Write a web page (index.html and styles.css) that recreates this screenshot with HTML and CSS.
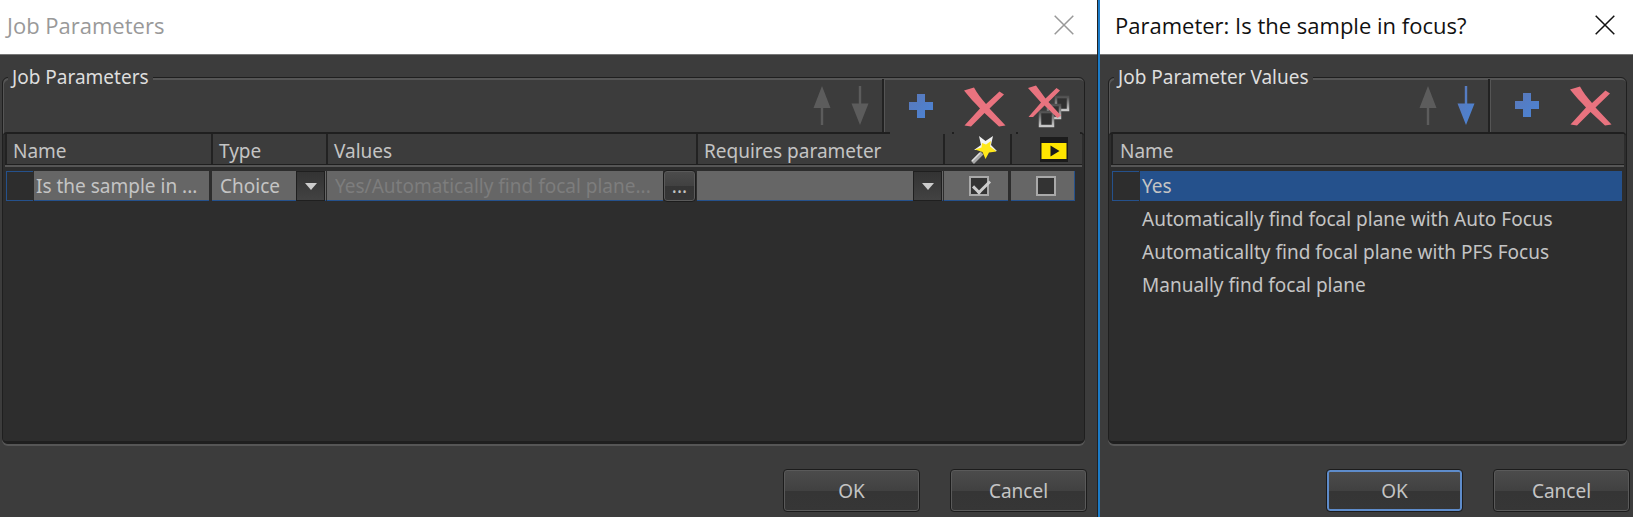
FILE: index.html
```html
<!DOCTYPE html>
<html lang="en">
<head>
<meta charset="utf-8">
<title>Job Parameters</title>
<link rel="stylesheet" href="styles.css">
</head>
<body>
<svg class="defs" aria-hidden="true">
  <defs>
    <linearGradient id="blue" x1="0" y1="0" x2="1" y2="1"><stop offset="0" stop-color="#5b78b8"/><stop offset="1" stop-color="#4a84d6"/></linearGradient>
    <linearGradient id="metal" x1="0" y1="0" x2="0" y2="1"><stop offset="0" stop-color="#505050"/><stop offset="1" stop-color="#c8c8c8"/></linearGradient>
    <symbol id="up" viewBox="0 0 18 40"><path d="M9 0 17.500 22H10.200V39H7.800V22H.5z"/></symbol>
    <symbol id="down" viewBox="0 0 18 40"><path d="M9 39 17.500 17.500H10.200V0H7.800V17.500H.5z"/></symbol>
    <symbol id="plus" viewBox="0 0 24 24"><path fill="url(#blue)" d="M8 0h8v8h8v8h-8v8H8v-8H0V8h8z"/></symbol>
    <symbol id="cross" viewBox="0 0 42 40"><path fill="#e9737f" d="M0 3.500 10 .5C13 6 17.500 12 22 17L35.500 4.500 40 7.500 25.500 21.500 41.500 38.500 35 39.500 20.500 26 7 39.500 .5 38.500 16 21.500C11 16 5 10 0 3.500z"/></symbol>
    <symbol id="close" viewBox="0 0 20 20"><path fill="none" stroke="currentColor" stroke-width="1.500" d="M.7.7 19.300 19.300M19.300.7.7 19.300"/></symbol>
  </defs>
</svg>
<main class="desktop">
  <section class="window">
    <header class="titlebar inactive">
      <h1>Job Parameters</h1>
      <button class="close" aria-label="Close"><svg><use href="#close"/></svg></button>
    </header>
    <div class="content">
      <fieldset class="group">
        <legend>Job Parameters</legend>
        <div class="toolbar overlapping">
          <button class="tool arrow" aria-label="Move up" disabled><svg width="18" height="40"><use href="#up"/></svg></button>
          <button class="tool arrow" aria-label="Move down" disabled><svg width="18" height="40"><use href="#down"/></svg></button>
          <span class="separator"></span>
          <button class="tool add" aria-label="Add"><svg width="24" height="24"><use href="#plus"/></svg></button>
          <button class="tool" aria-label="Remove"><svg width="42" height="40"><use href="#cross"/></svg></button>
          <button class="tool" aria-label="Remove all"><svg width="42" height="44" viewBox="0 0 42 44">
            <g fill="#303030" stroke="url(#metal)" stroke-width="2.500"><path d="M28 12H40V25H28z"/><path d="M20 20H32V33H20z"/><path d="M12 27H25V41H12z"/></g>
            <path fill="#e9737f" d="M0 3 8 .5 17.500 13.500 28.500 3 32 5.500 20.500 17 33 30.500 29.500 33 16.500 20.500 5 32H.5L13 17.500z"/></svg></button>
        </div>
        <div class="panel">
          <table class="params">
            <colgroup><col class="c-name"><col class="c-type"><col><col class="c-req"><col class="c-wand"><col class="c-play"></colgroup>
            <thead><tr>
              <th>Name</th><th>Type</th><th>Values</th><th>Requires parameter</th>
              <th class="icon" aria-label="Wizard"><svg width="28" height="28" viewBox="0 0 28 28"><path stroke="#a8a8a8" stroke-width="4" d="M1.500 26.500 11 17"/><path stroke="#e0e0e0" stroke-width="1.500" d="M1 25 9 17"/><path fill="#f2f2f2" d="M8 0 14.500 5 22 0 20 9 26 15 14 14 3 14 10 9z"/><path fill="#ffe81a" d="M11 7 15 8.500 20 5 19 10.500 25.500 15.500 18 16.500 14.500 23 11.500 16 4 13.500 10.500 11.500z"/></svg></th>
              <th class="icon" aria-label="Run"><svg width="28" height="26" viewBox="0 0 28 26"><path fill="#1c1c1c" d="M0 0H28V25H0z"/><path fill="#ffe600" d="M1.500 6H26.500V22H1.500z"/><path fill="#1c1c1c" d="M10.500 8.500 19.500 14 10.500 19.500z"/></svg></th>
            </tr></thead>
            <tbody><tr>
              <td><div class="cell"><span class="handle"></span><input class="field name" type="text" aria-label="Name" value="Is the sample in ..."></div></td>
              <td><div class="cell combo"><select class="field" aria-label="Type"><option>Choice</option></select><span class="drop"></span></div></td>
              <td><div class="cell flush"><input class="field" type="text" aria-label="Values" value="Yes/Automatically find focal plane..." disabled><button class="more" aria-label="Edit values">...</button></div></td>
              <td><div class="cell combo"><select class="field" aria-label="Requires parameter"><option></option></select><span class="drop"></span></div></td>
              <td><label class="cell check"><input type="checkbox" aria-label="Show in wizard" checked></label></td>
              <td><label class="cell check last"><input type="checkbox" aria-label="Show in run"></label></td>
            </tr></tbody>
          </table>
        </div>
      </fieldset>
      <footer class="actions"><button class="button">OK</button><button class="button">Cancel</button></footer>
    </div>
  </section>
  <section class="window dialog">
    <header class="titlebar">
      <h1>Parameter: Is the sample in focus?</h1>
      <button class="close" aria-label="Close"><svg><use href="#close"/></svg></button>
    </header>
    <div class="content">
      <fieldset class="group">
        <legend>Job Parameter Values</legend>
        <div class="toolbar">
          <button class="tool arrow" aria-label="Move up" disabled><svg width="18" height="40"><use href="#up"/></svg></button>
          <button class="tool arrow" aria-label="Move down"><svg width="18" height="40"><use href="#down"/></svg></button>
          <span class="separator"></span>
          <button class="tool add" aria-label="Add"><svg width="24" height="24"><use href="#plus"/></svg></button>
          <button class="tool" aria-label="Remove"><svg width="42" height="40"><use href="#cross"/></svg></button>
        </div>
        <div class="panel">
          <table class="values">
            <thead><tr><th>Name</th></tr></thead>
            <tbody>
              <tr class="selected"><td><div class="cell"><span class="handle"></span><span class="value">Yes</span></div></td></tr>
              <tr><td>Automatically find focal plane with Auto Focus</td></tr>
              <tr><td>Automaticallty find focal plane with PFS Focus</td></tr>
              <tr><td>Manually find focal plane</td></tr>
            </tbody>
          </table>
        </div>
      </fieldset>
      <footer class="actions"><button class="button default">OK</button><button class="button">Cancel</button></footer>
    </div>
  </section>
</main>
</body>
</html>
```
FILE: styles.css
```css
* { box-sizing: border-box; }
body {
  margin: 0;
  background: #3c3c3c;
  color: #c4c4c4;
  font: 19px/28px "Noto Sans", "Open Sans", sans-serif;
}
button, input, select { font: inherit; color: inherit; margin: 0; }
button { padding: 0; border: 0; background: none; }
svg { display: block; }
.defs { position: absolute; width: 0; height: 0; }

.desktop {
  display: grid;
  grid-template-columns: minmax(0, 1097fr) minmax(0, 536fr);
  min-height: 100vh;
}
.window { display: flex; flex-direction: column; }
.dialog { border-left: 1px solid #222; box-shadow: inset 2px 0 #1c7cc8; padding-left: 2px; }

.titlebar {
  display: flex;
  align-items: center;
  justify-content: space-between;
  height: 54px;
  padding: 0 23px 4px 7px;
  background: #fff;
  color: #111;
}
.dialog .titlebar { padding: 0 18px 4px 15px; }
.titlebar h1 { margin: 0; font: 22px/30px "Open Sans", "Noto Sans", sans-serif; }
.inactive { color: #999; }
.close svg { width: 20px; height: 20px; }

.content {
  flex: 1;
  display: flex;
  flex-direction: column;
  padding: 8px 12px 5px 2px;
  border-top: 1px solid #777;
}
.dialog .content { padding: 8px 6px 5px 8px; }

.group {
  flex: 1;
  display: flex;
  flex-direction: column;
  min-width: 0;
  margin: 0;
  padding: 0;
  border: 1px solid #1f1f1f;
  border-radius: 6px;
  box-shadow: inset 1px 2px #565656, 0 2px #565656;
}
.group legend { margin-left: 5px; padding: 0 4px; background: #3c3c3c; color: #dedede; }

.toolbar {
  display: flex;
  justify-content: flex-end;
  height: 55px;
  margin-top: -14px;
  padding-right: 3px;
}
.tool { display: flex; align-items: center; justify-content: center; width: 64px; padding-top: 2px; }
.tool svg { fill: url(#blue); }
.tool:disabled svg { fill: #5c5c5c; }
.arrow { width: 38px; }
.add { padding-top: 0; }
.separator { width: 3px; margin: 2px 4px 0 3px; background: #555; border-left: 2px solid #222; }

.panel { flex: 1; padding: 0 2px; background: #2d2d2d; border-top: 2px solid #1f1f1f; border-bottom: 2px solid #1f1f1f; border-radius: 4px; }
.overlapping .tool { position: relative; z-index: 1; }
.overlapping .separator ~ .tool { width: 62px; margin: 3px 1px -2px; background: #3c3c3c; padding-bottom: 5px; padding-top: 4px; }
.overlapping .separator ~ .add { padding-top: 2px; }

table { width: 100%; border-collapse: collapse; table-layout: fixed; }
th {
  height: 32px;
  padding: 2px 0 0 8px;
  background: #3c3c3c;
  border-bottom: 2px solid #565656;
  box-shadow: inset 0 -1px #1f1f1f, inset 2px 0 #222;
  font-weight: 400;
  text-align: left;
  white-space: nowrap;
}
th.icon { padding: 0 0 0 16px; }
.icon svg { margin: auto; }
td { padding: 0; }
.c-name { width: 206px; }
.c-type { width: 115px; }
.c-req { width: 247px; }
.c-wand { width: 67px; }
.c-play { width: 72px; }

.params tbody td { padding-top: 4px; }
.cell { display: flex; position: relative; height: 30px; margin: 0 2px 0 1px; }
.flush { margin-right: 0; }
.combo { margin-right: 0; }
.handle { flex: none; width: 27px; border: 1px solid #25518c; border-right: 0; margin-right: 1px; }
.field {
  flex: 1;
  min-width: 0;
  width: 100%;
  height: 30px;
  padding: 0 8px;
  border: 0;
  border-bottom: 1px solid #25518c;
  border-radius: 0;
  background: #666;
  appearance: none;
}
.field.name { padding: 0 2px; }
.field:disabled { color: #7d7d7d; }
.drop {
  position: absolute;
  right: 1px;
  top: 0;
  display: flex;
  align-items: center;
  justify-content: center;
  width: 29px;
  height: 30px;
  border: 1px solid #1f1f1f;
  background: linear-gradient(#333, #424242);
  pointer-events: none;
}
.drop::before { content: ""; border: 6px solid transparent; border-top: 7px solid #ccc; border-bottom: 0; }
.more, .button {
  border: 1px solid #1c1c1c;
  border-radius: 4px;
  box-shadow: inset 0 0 0 1px #5a5a5a;
  background: linear-gradient(#4c4c4c, #414141 50%, #353535 51%, #363636);
}
.more { flex: none; width: 33px; height: 32px; margin-top: -1px; }
.check { align-items: center; justify-content: center; padding-left: 6px; background: #666; border-bottom: 1px solid #25518c; }
.last { margin-right: 7px; border-right: 1px solid #25518c; }
.check input {
  width: 20px;
  height: 20px;
  border: 2px solid #a9a9a9;
  background: #333;
  appearance: none;
}
.check input:checked::before {
  content: "";
  display: block;
  width: 14px;
  height: 7px;
  margin: 2px 0 0 2px;
  border: solid #ccc;
  border-width: 0 0 3px 3px;
  transform: rotate(-45deg);
}

.values th { padding-left: 9px; }
.values tbody td { height: 33px; padding: 0 0 0 31px; }
.values .selected td { height: 35px; padding: 4px 0 1px; }
.value { flex: 1; padding-left: 2px; background: #25518c; line-height: 30px; }

.actions { display: flex; justify-content: flex-end; gap: 30px; margin: 25px -2px 0 0; }
.button { width: 137px; height: 43px; }
.dialog .actions { margin-right: -3px; }
.button.default { box-shadow: inset 0 0 0 2px #5e8ccb; }
```
